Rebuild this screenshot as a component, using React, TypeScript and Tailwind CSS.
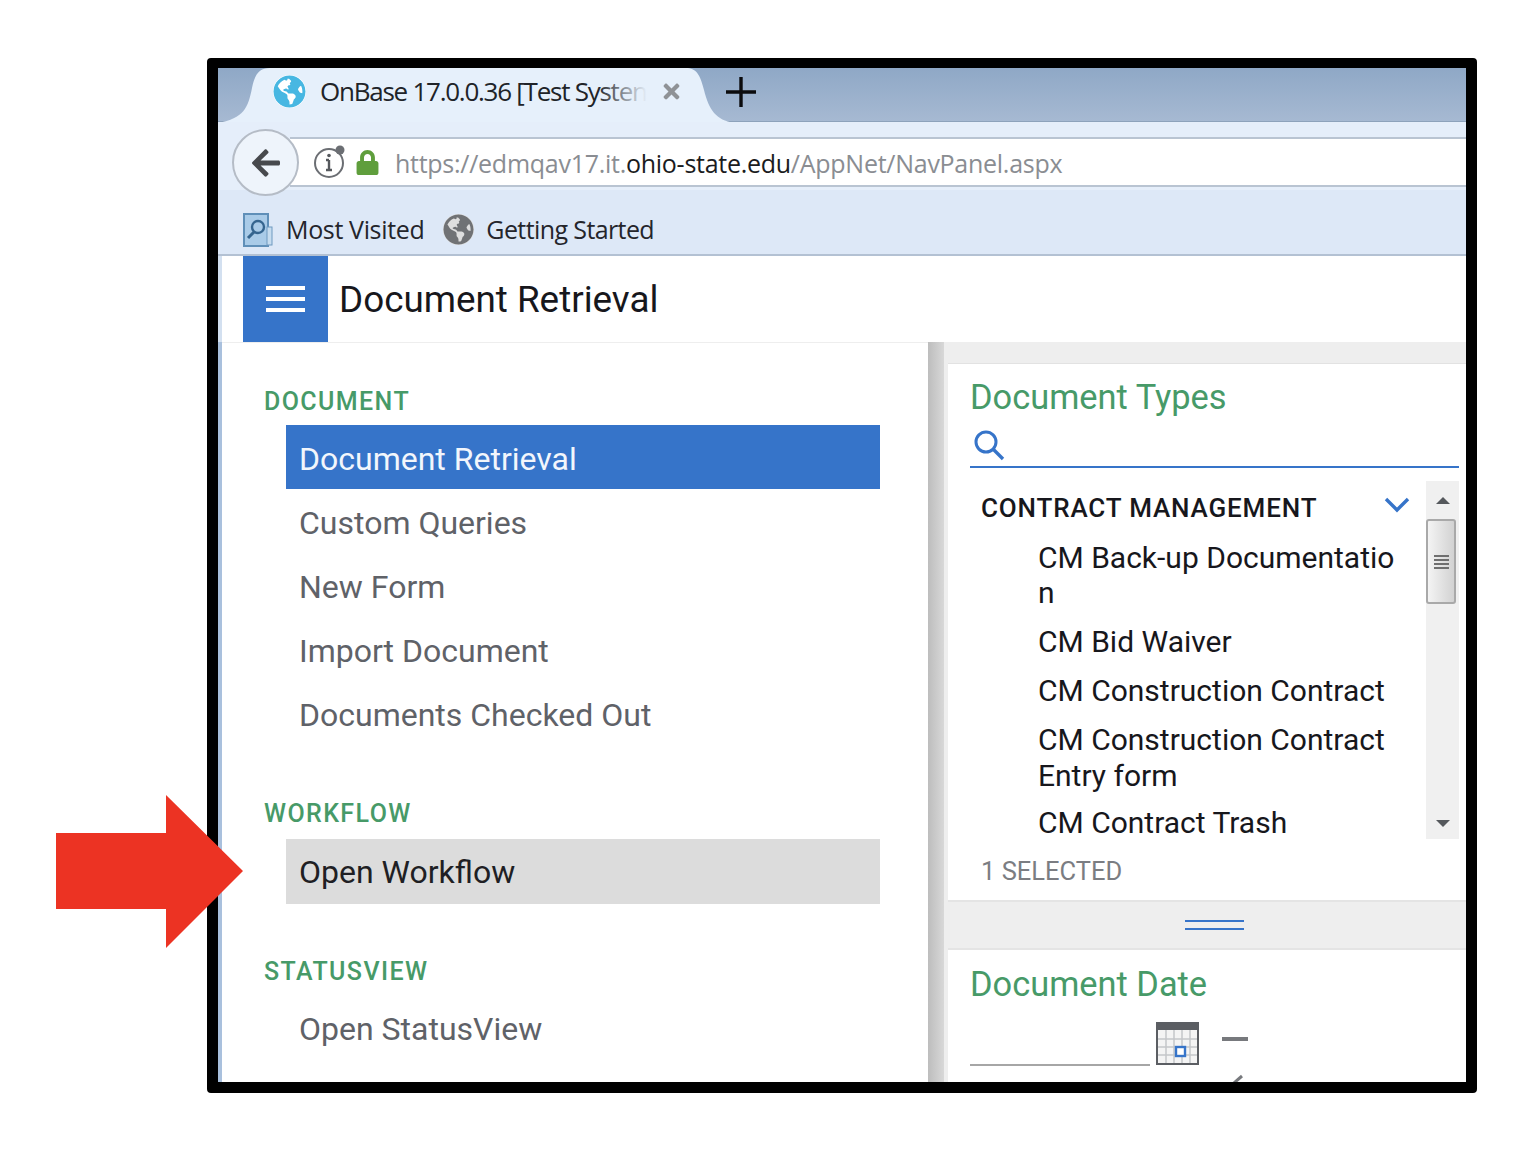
import { FaArrowLeft, FaGlobeAmericas, FaLock, FaTimes } from "react-icons/fa";

const roboto = "font-['Roboto',sans-serif]";
const chrome = "font-['Open_Sans',sans-serif]";

function NavItem({ label, state }: { label: string; state?: "active" | "hover" }) {
  const look =
    state === "active"
      ? "h-[64px] pt-[4px] bg-[#3674c9] text-[#f2f6fc]"
      : state === "hover"
        ? "h-[65px] bg-[#dcdcdc] text-[#1f1f24]"
        : "h-[64px] pt-[4px] text-[#5f6268]";
  return <div className={`ml-[64px] w-[594px] flex items-center pl-[13px] text-[32px] ${look}`}>{label}</div>;
}

function SectionLabel({ label, className }: { label: string; className: string }) {
  return (
    <div className={`ml-[42px] h-[30px] flex items-center text-[25px] font-medium tracking-[1.4px] text-[#479a68] ${className}`}>
      {label}
    </div>
  );
}

function DocType({ children, className }: { children: React.ReactNode; className?: string }) {
  return <div className={`pl-[68px] w-[428px] text-[30px] leading-[36px] text-[#17171c] ${className ?? ""}`}>{children}</div>;
}

function Calendar() {
  return (
    <svg width="43" height="43" viewBox="0 0 43 43">
      <rect x="0" y="0" width="43" height="43" fill="#5b5e63" />
      <rect x="2" y="8" width="39" height="33" fill="#f4f4f4" />
      <path d="M2 17h39M2 25h39M2 33h39M10 8v33M18 8v33M26 8v33M34 8v33" stroke="#c4c6c9" strokeWidth="1.5" />
      <rect x="20" y="25" width="9" height="9" fill="#fff" stroke="#3674c9" strokeWidth="2.4" />
    </svg>
  );
}

export default function App() {
  return (
    <div className={`relative w-[1536px] h-[1159px] bg-white overflow-hidden pt-[58px] pl-[207px] ${roboto}`}>
      <div className="w-[1270px] h-[1035px] border-[11px] border-t-[10px] border-black rounded-[4px] overflow-hidden flex flex-col bg-white">
        {/* tab strip */}
        <div className="relative h-[54px] shrink-0 bg-gradient-to-b from-[#8fa8c6] to-[#a6b9d2] border-b border-[#8da2bb]">
          <svg className="absolute left-0 top-0" width="530" height="55" viewBox="0 0 530 55">
            <path d="M0 55C26 50 30 40 34 20C37 5 42 0 52 0H468C478 0 482 6 486 22C491 42 498 52 516 55Z" fill="#e6f0fb" />
          </svg>
          <FaGlobeAmericas className="absolute left-[55px] top-[7px] text-[#47b7e2] bg-white rounded-full" size={33} />
          <div className={`absolute left-[102px] top-[5px] whitespace-nowrap text-[26px] leading-[36px] tracking-[-1.25px] text-[#202328] ${chrome}`}>
            OnBase 17.0.0.36 [Test Systen
            <div className="absolute right-0 top-0 w-[50px] h-full bg-gradient-to-r from-transparent to-[#e6f0fb]" />
          </div>
          <FaTimes className="absolute left-[442px] top-[12px] text-[#8f9296]" size={23} />
          <svg className="absolute left-[507px] top-[8px]" width="32" height="32" viewBox="0 0 32 32">
            <path d="M16 1v30M1 16h30" stroke="#0b0b0d" strokeWidth="3.4" />
          </svg>
        </div>

        {/* url bar */}
        <div className="relative h-[68px] shrink-0 bg-[#e5eefa] pt-[15px] pl-[72px]">
          <div className="h-[50px] bg-white border-y-2 border-[#b9c4d2] flex items-center pl-[23px]">
            <svg width="34" height="34" viewBox="0 0 34 34" className="shrink-0">
              <circle cx="16" cy="18" r="14" fill="none" stroke="#6b6e73" strokeWidth="2" />
              <path d="M16 15v10M13 25h6M13 15h3" stroke="#55585d" strokeWidth="2.4" />
              <circle cx="16" cy="10.5" r="1.8" fill="#55585d" />
              <circle cx="27" cy="5" r="4.5" fill="#6b6e73" />
            </svg>
            <FaLock className="ml-[8px] text-[#5f9e3c] shrink-0" size={25} />
            <div className={`ml-[15px] pt-[4px] whitespace-nowrap text-[25px] tracking-[-0.27px] text-[#8a8d92] ${chrome}`}>
              https://edmqav17.it.<span className="text-[#1a1b20]">ohio-state.edu</span>/AppNet/NavPanel.aspx
            </div>
          </div>
          <div className="absolute left-[14px] top-[7px] w-[67px] h-[67px] rounded-full bg-[#eef4fb] border-2 border-[#b5bcc6] flex items-center justify-center">
            <FaArrowLeft className="text-[#47494d]" size={32} />
          </div>
        </div>

        {/* bookmarks */}
        <div className="h-[66px] shrink-0 bg-[#dde8f7] border-b-2 border-[#b3c1d3] flex items-center pl-[25px] pt-[15px]">
          <svg width="30" height="34" viewBox="0 0 30 34">
            <rect x="1" y="1" width="24" height="32" fill="#a9cbe8" stroke="#5f8fb8" strokeWidth="2" />
            <rect x="24" y="14" width="5" height="18" fill="#c6dcef" stroke="#6f9ac0" />
            <circle cx="15" cy="14" r="6" fill="none" stroke="#35658f" strokeWidth="2.4" />
            <path d="M11 19l-6 6" stroke="#35658f" strokeWidth="3" />
          </svg>
          <span className={`ml-[13px] text-[25px] tracking-[-0.35px] text-[#24252b] ${chrome}`}>Most Visited</span>
          <FaGlobeAmericas className="ml-[19px] text-[#707275] bg-[#dedede] rounded-full" size={31} />
          <span className={`ml-[12px] text-[25px] tracking-[-0.6px] text-[#24252b] ${chrome}`}>Getting Started</span>
        </div>

        {/* app header */}
        <div className="h-[86px] shrink-0 flex items-stretch pl-[21px] border-l-4 border-[#d3e0f0] bg-white">
          <div className="w-[85px] bg-[#3674c9] flex flex-col items-center justify-center gap-[7.5px]">
            <div className="w-[39px] h-[3.5px] bg-white" />
            <div className="w-[39px] h-[3.5px] bg-white" />
            <div className="w-[39px] h-[3.5px] bg-white" />
          </div>
          <div className="ml-[11px] pt-[1px] flex items-center text-[36.8px] text-[#17171c]">Document Retrieval</div>
        </div>

        {/* body */}
        <div className="flex-1 min-h-0 flex bg-white">
          <div className="w-[4px] bg-[#a9c0dd]" />
          <div className="w-[706px] pt-[44px] border-t border-[#eeeeee]">
            <SectionLabel label="DOCUMENT" className="mb-[8px]" />
            <NavItem label="Document Retrieval" state="active" />
            <NavItem label="Custom Queries" />
            <NavItem label="New Form" />
            <NavItem label="Import Document" />
            <NavItem label="Documents Checked Out" />
            <SectionLabel label="WORKFLOW" className="mt-[54px] mb-[10px]" />
            <NavItem label="Open Workflow" state="hover" />
            <SectionLabel label="STATUSVIEW" className="mt-[53px] mb-[8px]" />
            <NavItem label="Open StatusView" />
          </div>
          <div className="w-[16px] bg-gradient-to-r from-[#bdbdbd] to-[#d8d8d8]" />
          <div className="w-[4px] bg-[#eeeeee]" />
          <div className="flex-1 min-w-0 bg-[#eeeeee] pt-[21px] flex flex-col">
            {/* document types card */}
            <div className="h-[537px] shrink-0 bg-white pl-[22px] border-t border-[#e2e2e2]">
              <div className="h-[62px] pt-[14px] text-[34.4px] leading-[38px] text-[#479a68]">Document Types</div>
              <div className="w-[489px] h-[42px] border-b-2 border-[#3674c9] pl-[3px] pt-[3px]">
                <svg width="32" height="32" viewBox="0 0 32 32">
                  <circle cx="13" cy="13" r="10" fill="none" stroke="#3674c9" strokeWidth="3" />
                  <path d="M20 20l10 10" stroke="#3674c9" strokeWidth="3.4" />
                </svg>
              </div>
              <div className="relative mt-[13px] h-[358px] w-[489px]">
                <div className="pl-[11px] pt-[11px] h-[50px] text-[26px] leading-[32px] font-medium tracking-[0.85px] text-[#17171c]">
                  CONTRACT MANAGEMENT
                </div>
                <svg className="absolute left-[414px] top-[15px]" width="26" height="17" viewBox="0 0 26 17">
                  <path d="M2 3l11 11L24 3" fill="none" stroke="#3674c9" strokeWidth="3.4" />
                </svg>
                <DocType className="whitespace-pre-line !leading-[35px] pb-[14px] pt-[9px]">{"CM Back-up Documentatio\nn"}</DocType>
                <DocType className="pb-[13px]">CM Bid Waiver</DocType>
                <DocType className="pb-[13px]">CM Construction Contract</DocType>
                <DocType className="pb-[11px]">CM Construction Contract Entry form</DocType>
                <DocType>CM Contract Trash</DocType>
                {/* scrollbar */}
                <div className="absolute left-[456px] top-0 w-[33px] h-full bg-[#f0f0f0] flex flex-col items-center">
                  <div className="h-[38px] flex items-center">
                    <div className="w-0 h-0 border-x-[7px] border-x-transparent border-b-[7px] border-b-[#55585c]" />
                  </div>
                  <div className="w-[30px] h-[85px] -ml-[3px] rounded-[3px] border-2 border-[#a9a9a9] bg-gradient-to-r from-[#f4f4f4] to-[#d2d2d2] flex flex-col items-center justify-center gap-[2px]">
                    <div className="w-[15px] h-[2px] bg-[#6f6f6f]" />
                    <div className="w-[15px] h-[2px] bg-[#6f6f6f]" />
                    <div className="w-[15px] h-[2px] bg-[#6f6f6f]" />
                    <div className="w-[15px] h-[2px] bg-[#6f6f6f]" />
                  </div>
                  <div className="mt-auto h-[32px] flex items-center">
                    <div className="w-0 h-0 border-x-[7px] border-x-transparent border-t-[7px] border-t-[#55585c]" />
                  </div>
                </div>
              </div>
              <div className="pl-[11px] pt-[16px] text-[25.5px] leading-[32px] text-[#7b7d82]">1 SELECTED</div>
            </div>

            {/* splitter */}
            <div className="h-[50px] shrink-0 border-y-2 border-[#e4e4e4] flex flex-col items-center justify-center gap-[6px] pl-[15px]">
              <div className="w-[59px] h-[2px] bg-[#3674c9]" />
              <div className="w-[59px] h-[2px] bg-[#3674c9]" />
            </div>

            {/* document date card */}
            <div className="flex-1 min-h-0 bg-white pl-[22px] overflow-hidden">
              <div className="h-[72px] pt-[15px] text-[34.4px] leading-[38px] text-[#479a68]">Document Date</div>
              <div className="flex items-start">
                <div className="w-[180px] h-[44px] border-b-2 border-[#a6a6a6]" />
                <div className="ml-[6px]">
                  <Calendar />
                </div>
                <div className="ml-[23px] mt-[15px] w-[26px] h-[4px] bg-[#77797d]" />
              </div>
              <div className="relative flex items-start h-[20px] mt-[15px] ml-[186px]">
                <div className="w-[43px] h-[4px] bg-[#5b5e63] mt-[1px]" />
                <svg className="ml-[26px] -mt-[7px]" width="20" height="16" viewBox="0 0 20 16">
                  <path d="M2 15L17 2" stroke="#77797d" strokeWidth="3" />
                </svg>
              </div>
            </div>
          </div>
        </div>
      </div>

      {/* red callout arrow */}
      <svg className="absolute left-[56px] top-[795px]" width="187" height="153" viewBox="0 0 187 153">
        <polygon points="0,38 110,38 110,0 187,76 110,153 110,114 0,114" fill="#ec3323" />
      </svg>
    </div>
  );
}
